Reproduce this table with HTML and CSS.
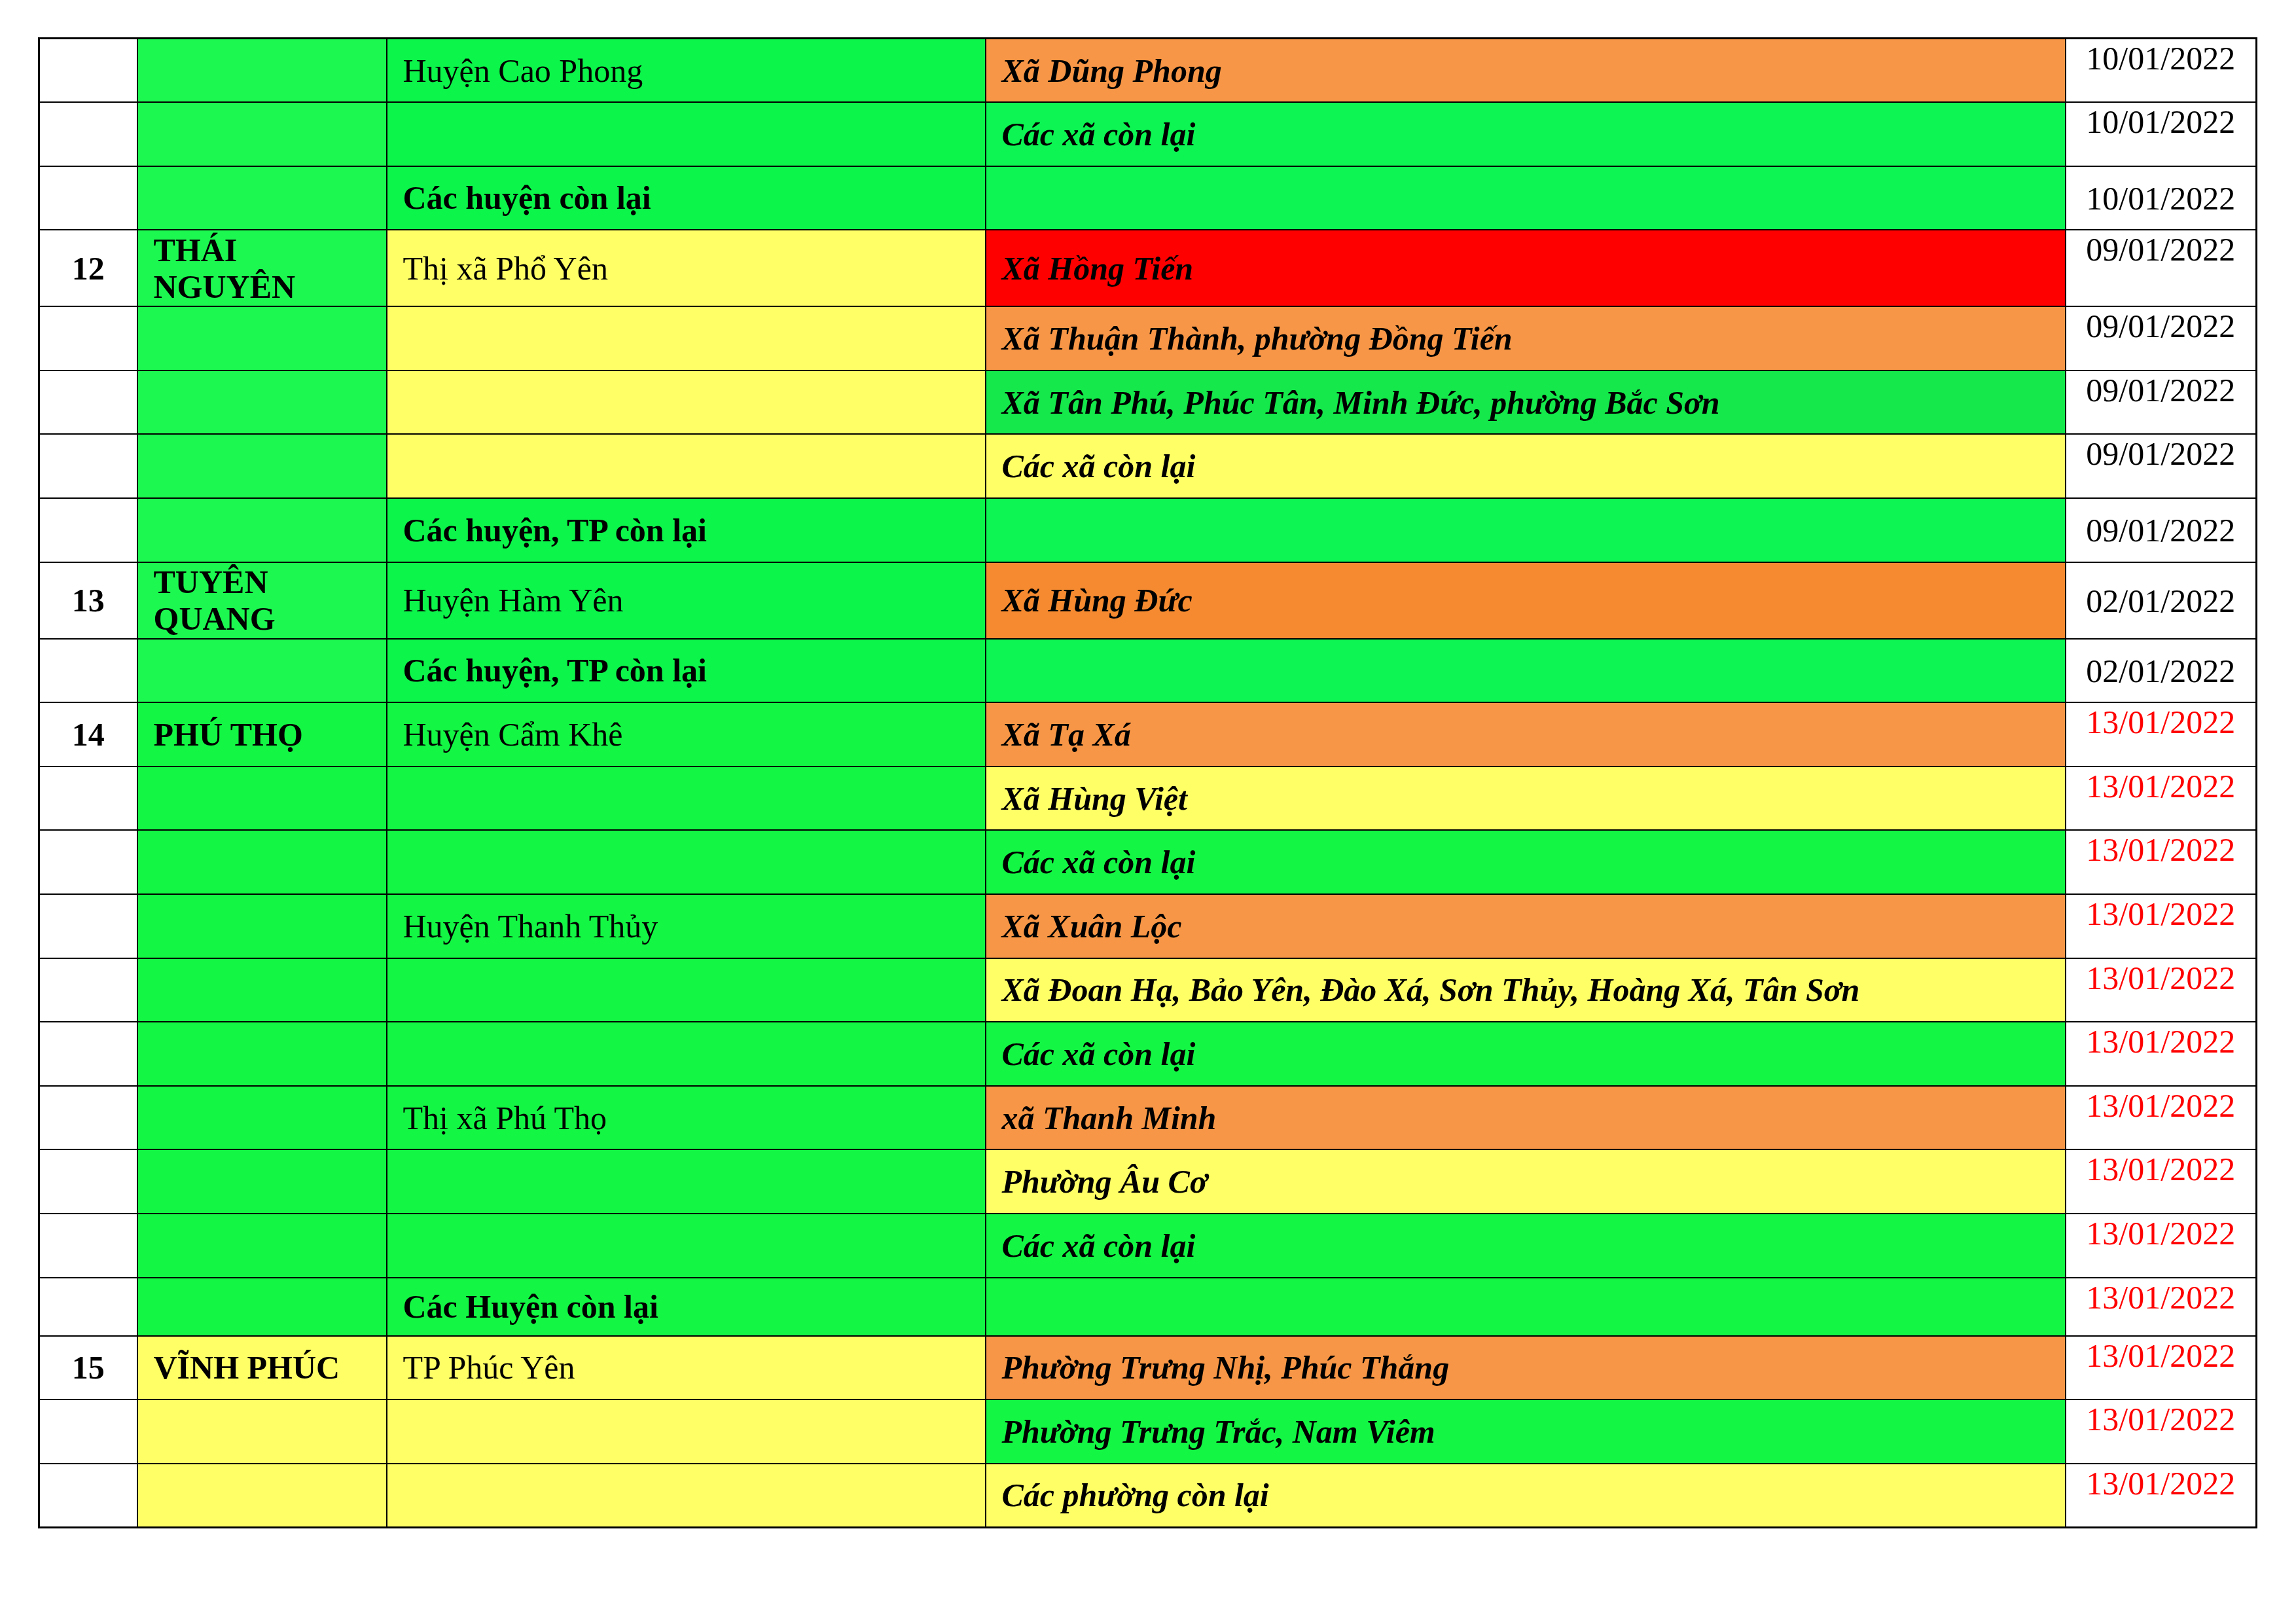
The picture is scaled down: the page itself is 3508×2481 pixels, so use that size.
FILE: index.html
```html
<!DOCTYPE html>
<html lang="vi">
<head>
<meta charset="utf-8">
<title>Bảng cấp độ dịch</title>
<link rel="stylesheet" href="styles.css">
</head>
<body>
<div class="page">
<table class="grid">
<colgroup>
<col class="c-num"><col class="c-prov"><col class="c-dist"><col class="c-comm"><col class="c-date">
</colgroup>
<tbody>
<tr class="r">
<td class="num"></td><td class="prov g1"></td><td class="dist g2">Huyện Cao Phong</td><td class="comm or">Xã Dũng Phong</td><td class="date">10/01/2022</td>
</tr>
<tr class="r">
<td class="num"></td><td class="prov g1"></td><td class="dist g2"></td><td class="comm g3">Các xã còn lại</td><td class="date">10/01/2022</td>
</tr>
<tr class="r">
<td class="num"></td><td class="prov g1"></td><td class="dist g2 bold">Các huyện còn lại</td><td class="comm g3"></td><td class="date mid">10/01/2022</td>
</tr>
<tr class="r tall">
<td class="num">12</td><td class="prov g1">THÁI NGUYÊN</td><td class="dist ye">Thị xã Phổ Yên</td><td class="comm rd">Xã Hồng Tiến</td><td class="date">09/01/2022</td>
</tr>
<tr class="r">
<td class="num"></td><td class="prov g1"></td><td class="dist ye"></td><td class="comm or">Xã Thuận Thành, phường Đồng Tiến</td><td class="date">09/01/2022</td>
</tr>
<tr class="r">
<td class="num"></td><td class="prov g1"></td><td class="dist ye"></td><td class="comm g4">Xã Tân Phú, Phúc Tân, Minh Đức, phường Bắc Sơn</td><td class="date">09/01/2022</td>
</tr>
<tr class="r">
<td class="num"></td><td class="prov g1"></td><td class="dist ye"></td><td class="comm ye">Các xã còn lại</td><td class="date">09/01/2022</td>
</tr>
<tr class="r">
<td class="num"></td><td class="prov g1"></td><td class="dist g2 bold">Các huyện, TP còn lại</td><td class="comm g3"></td><td class="date mid">09/01/2022</td>
</tr>
<tr class="r tall">
<td class="num">13</td><td class="prov g1">TUYÊN QUANG</td><td class="dist g2">Huyện Hàm Yên</td><td class="comm or2">Xã Hùng Đức</td><td class="date mid">02/01/2022</td>
</tr>
<tr class="r">
<td class="num"></td><td class="prov g1"></td><td class="dist g2 bold">Các huyện, TP còn lại</td><td class="comm g3"></td><td class="date mid">02/01/2022</td>
</tr>
<tr class="r">
<td class="num">14</td><td class="prov g5">PHÚ THỌ</td><td class="dist g5">Huyện Cẩm Khê</td><td class="comm or">Xã Tạ Xá</td><td class="date red">13/01/2022</td>
</tr>
<tr class="r">
<td class="num"></td><td class="prov g5"></td><td class="dist g5"></td><td class="comm ye">Xã Hùng Việt</td><td class="date red">13/01/2022</td>
</tr>
<tr class="r">
<td class="num"></td><td class="prov g5"></td><td class="dist g5"></td><td class="comm g5">Các xã còn lại</td><td class="date red">13/01/2022</td>
</tr>
<tr class="r">
<td class="num"></td><td class="prov g5"></td><td class="dist g5">Huyện Thanh Thủy</td><td class="comm or">Xã Xuân Lộc</td><td class="date red">13/01/2022</td>
</tr>
<tr class="r">
<td class="num"></td><td class="prov g5"></td><td class="dist g5"></td><td class="comm ye">Xã Đoan Hạ, Bảo Yên, Đào Xá, Sơn Thủy, Hoàng Xá, Tân Sơn</td><td class="date red">13/01/2022</td>
</tr>
<tr class="r">
<td class="num"></td><td class="prov g5"></td><td class="dist g5"></td><td class="comm g5">Các xã còn lại</td><td class="date red">13/01/2022</td>
</tr>
<tr class="r">
<td class="num"></td><td class="prov g5"></td><td class="dist g5">Thị xã Phú Thọ</td><td class="comm or">xã Thanh Minh</td><td class="date red">13/01/2022</td>
</tr>
<tr class="r">
<td class="num"></td><td class="prov g5"></td><td class="dist g5"></td><td class="comm ye">Phường Âu Cơ</td><td class="date red">13/01/2022</td>
</tr>
<tr class="r">
<td class="num"></td><td class="prov g5"></td><td class="dist g5"></td><td class="comm g5">Các xã còn lại</td><td class="date red">13/01/2022</td>
</tr>
<tr class="r short">
<td class="num"></td><td class="prov g5"></td><td class="dist g5 bold">Các Huyện còn lại</td><td class="comm g5"></td><td class="date red">13/01/2022</td>
</tr>
<tr class="r">
<td class="num">15</td><td class="prov ye">VĨNH PHÚC</td><td class="dist ye">TP Phúc Yên</td><td class="comm or">Phường Trưng Nhị, Phúc Thắng</td><td class="date red">13/01/2022</td>
</tr>
<tr class="r">
<td class="num"></td><td class="prov ye"></td><td class="dist ye"></td><td class="comm g5">Phường Trưng Trắc, Nam Viêm</td><td class="date red">13/01/2022</td>
</tr>
<tr class="r">
<td class="num"></td><td class="prov ye"></td><td class="dist ye"></td><td class="comm ye">Các phường còn lại</td><td class="date red">13/01/2022</td>
</tr>
</tbody>
</table>
</div>
</body>
</html>
```
FILE: styles.css
```css
html, body {
  margin: 0;
  padding: 0;
  background: #ffffff;
}

.page {
  padding: 57px 0 0 58px;
  font-family: "Liberation Serif", "Times New Roman", serif;
  font-size: 50px;
  color: #000000;
}

.grid {
  border-collapse: collapse;
  table-layout: fixed;
  width: 3391px;
  border: 3px solid #000000;
}

.c-num { width: 150px; }
.c-prov { width: 381px; }
.c-dist { width: 915px; }
.c-comm { width: 1650px; }
.c-date { width: 292px; }

.grid td {
  border: 2px solid #000000;
  padding: 0 24px;
  vertical-align: middle;
  line-height: 1.12;
  overflow: hidden;
}

.r { height: 97.6px; }
.r.tall { height: 117px; }
.r.short { height: 89px; }

.num {
  text-align: center;
  font-weight: bold;
  padding: 0;
}

.prov {
  font-weight: bold;
  padding-left: 25px;
}

.dist { font-weight: normal; }
.dist.bold { font-weight: bold; }

.comm {
  font-weight: bold;
  font-style: italic;
}

.grid td.date {
  text-align: center;
  vertical-align: top;
  padding: 1px 0 0 0;
  white-space: nowrap;
}

.grid td.date.mid { vertical-align: middle; }

.date.red { color: #ff0000; }

.g1 { background: #1cf850; }
.g2 { background: #0cf54a; }
.g3 { background: #0cf552; }
.g4 { background: #14e84a; }
.g5 { background: #13f744; }
.ye { background: #ffff66; }
.or { background: #f79646; }
.or2 { background: #f58a30; }
.rd { background: #fe0000; }
```
